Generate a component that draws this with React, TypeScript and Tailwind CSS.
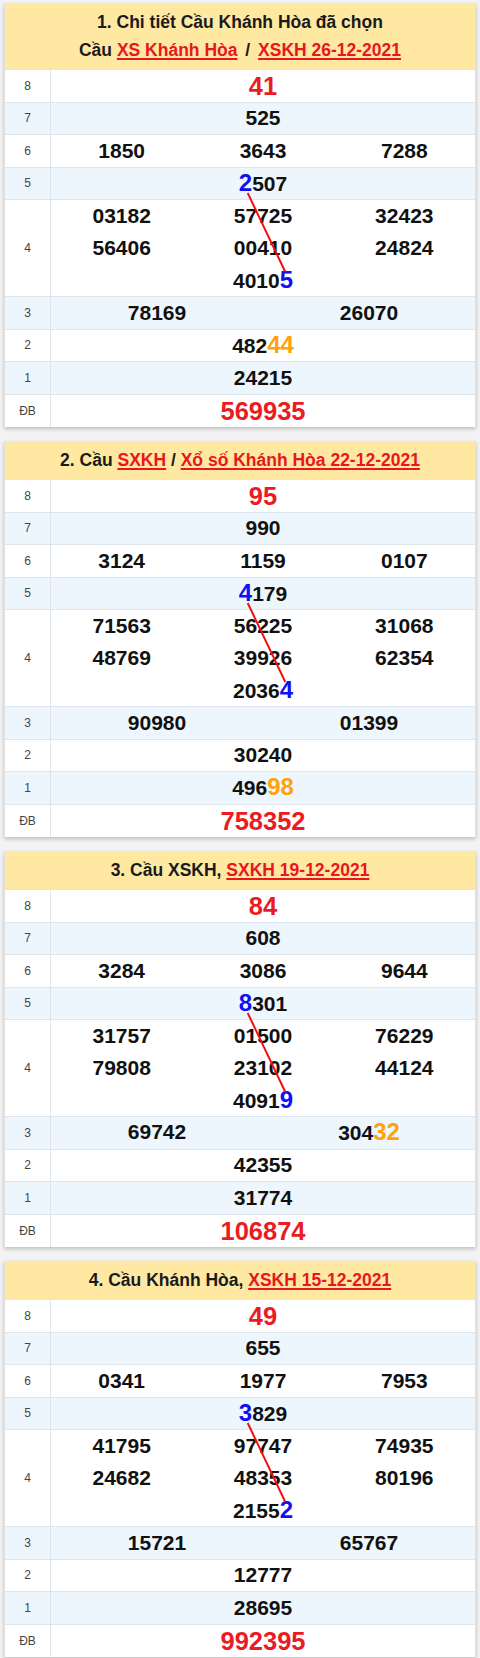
import React from 'react';

type Cau = {
  header: React.ReactNode;
  twoLine?: boolean;
  g8: string;
  g7: string;
  g6: string[];
  g5: React.ReactNode;
  g4: React.ReactNode[];
  g3: React.ReactNode[];
  g2: React.ReactNode;
  g1: React.ReactNode;
  db: string;
};

const B = ({ children }: { children: React.ReactNode }) => (
  <span className="text-[24px] text-[#1010f0]">{children}</span>
);
const O = ({ children }: { children: React.ReactNode }) => (
  <span className="text-[24px] text-[#ffa20c]">{children}</span>
);
const A = ({ children }: { children: React.ReactNode }) => (
  <a href="#" className="text-[#e8161e] underline decoration-[1.5px] underline-offset-2">
    {children}
  </a>
);

const data: Cau[] = [
  {
    twoLine: true,
    header: (
      <>
        <div>1. Chi tiết Cầu Khánh Hòa đã chọn</div>
        <div>
          Cầu <A>XS Khánh Hòa</A>
          <span className="mx-[3px]"> / </span>
          <A>XSKH 26-12-2021</A>
        </div>
      </>
    ),
    g8: '41',
    g7: '525',
    g6: ['1850', '3643', '7288'],
    g5: (<><B>2</B>507</>),
    g4: ['03182', '57725', '32423', '56406', '00410', '24824', <>4010<B>5</B></>],
    g3: ['78169', '26070'],
    g2: (<>482<O>44</O></>),
    g1: '24215',
    db: '569935',
  },
  {
    header: (
      <div>
        2. Cầu <A>SXKH</A> / <A>Xổ số Khánh Hòa 22-12-2021</A>
      </div>
    ),
    g8: '95',
    g7: '990',
    g6: ['3124', '1159', '0107'],
    g5: (<><B>4</B>179</>),
    g4: ['71563', '56225', '31068', '48769', '39926', '62354', <>2036<B>4</B></>],
    g3: ['90980', '01399'],
    g2: '30240',
    g1: (<>496<O>98</O></>),
    db: '758352',
  },
  {
    header: (
      <div>
        3. Cầu XSKH, <A>SXKH 19-12-2021</A>
      </div>
    ),
    g8: '84',
    g7: '608',
    g6: ['3284', '3086', '9644'],
    g5: (<><B>8</B>301</>),
    g4: ['31757', '01500', '76229', '79808', '23102', '44124', <>4091<B>9</B></>],
    g3: ['69742', <>304<O>32</O></>],
    g2: '42355',
    g1: '31774',
    db: '106874',
  },
  {
    header: (
      <div>
        4. Cầu Khánh Hòa, <A>XSKH 15-12-2021</A>
      </div>
    ),
    g8: '49',
    g7: '655',
    g6: ['0341', '1977', '7953'],
    g5: (<><B>3</B>829</>),
    g4: ['41795', '97747', '74935', '24682', '48353', '80196', <>2155<B>2</B></>],
    g3: ['15721', '65767'],
    g2: '12777',
    g1: '28695',
    db: '992395',
  },
];

const Row = ({
  label,
  blue,
  tall,
  last,
  children,
}: {
  label: string;
  blue?: boolean;
  tall?: boolean;
  last?: boolean;
  children: React.ReactNode;
}) => (
  <div
    className={`flex ${last ? '' : 'border-b'} border-[#dfe5ec] ${blue ? 'bg-[#eef6fd]' : 'bg-white'} ${
      tall ? 'h-[97px]' : 'h-[32.5px]'
    }`}
  >
    <div className="w-[46px] shrink-0 border-r border-[#dfe5ec] flex items-center justify-center text-[12px] text-[#444]">
      {label}
    </div>
    <div className="flex-1 flex flex-col justify-center text-[21px] font-bold text-[#111] leading-[32px]">
      {children}
    </div>
  </div>
);

const Card = ({ c }: { c: Cau }) => (
  <div className="bg-white border-x border-[#e0e0e0] shadow-[0_2px_4px_rgba(0,0,0,0.22)]">
    <div
      className={`bg-[#ffe8a2] text-center font-bold text-[17.5px] text-[#1a1a1a] leading-[28px] ${
        c.twoLine ? 'py-[5px]' : 'py-[5px]'
      } border-b border-[#dfe5ec]`}
    >
      {c.header}
    </div>
    <Row label="8">
      <div className="text-center text-[25.5px] text-[#ec1b23]">{c.g8}</div>
    </Row>
    <Row label="7" blue>
      <div className="text-center">{c.g7}</div>
    </Row>
    <Row label="6">
      <div className="grid grid-cols-3 text-center">
        {c.g6.map((n, i) => (
          <div key={i}>{n}</div>
        ))}
      </div>
    </Row>
    <div className="relative">
      <Row label="5" blue>
        <div className="text-center">{c.g5}</div>
      </Row>
      <Row label="4" tall>
        <div className="grid grid-cols-3 text-center">
          {c.g4.slice(0, 6).map((n, i) => (
            <div key={i}>{n}</div>
          ))}
        </div>
        <div className="text-center">{c.g4[6]}</div>
      </Row>
      <svg className="absolute left-0 top-0 w-full h-full pointer-events-none overflow-visible">
        <line x1="242.7" y1="25" x2="280.3" y2="104" stroke="#f01010" strokeWidth="2" />
      </svg>
    </div>
    <Row label="3" blue>
      <div className="grid grid-cols-2 text-center">
        {c.g3.map((n, i) => (
          <div key={i}>{n}</div>
        ))}
      </div>
    </Row>
    <Row label="2">
      <div className="text-center">{c.g2}</div>
    </Row>
    <Row label="1" blue>
      <div className="text-center">{c.g1}</div>
    </Row>
    <Row label="ĐB" last>
      <div className="text-center text-[25.5px] text-[#ec1b23]">{c.db}</div>
    </Row>
  </div>
);

export default function App() {
  return (
    <div className="w-[480px] min-h-[1658px] bg-[#f3f3f3] px-[4px] pt-[3px] pb-[5px] flex flex-col gap-[14px] font-['Liberation_Sans',Arial,sans-serif]">
      {data.map((c, i) => (
        <Card key={i} c={c} />
      ))}
    </div>
  );
}
